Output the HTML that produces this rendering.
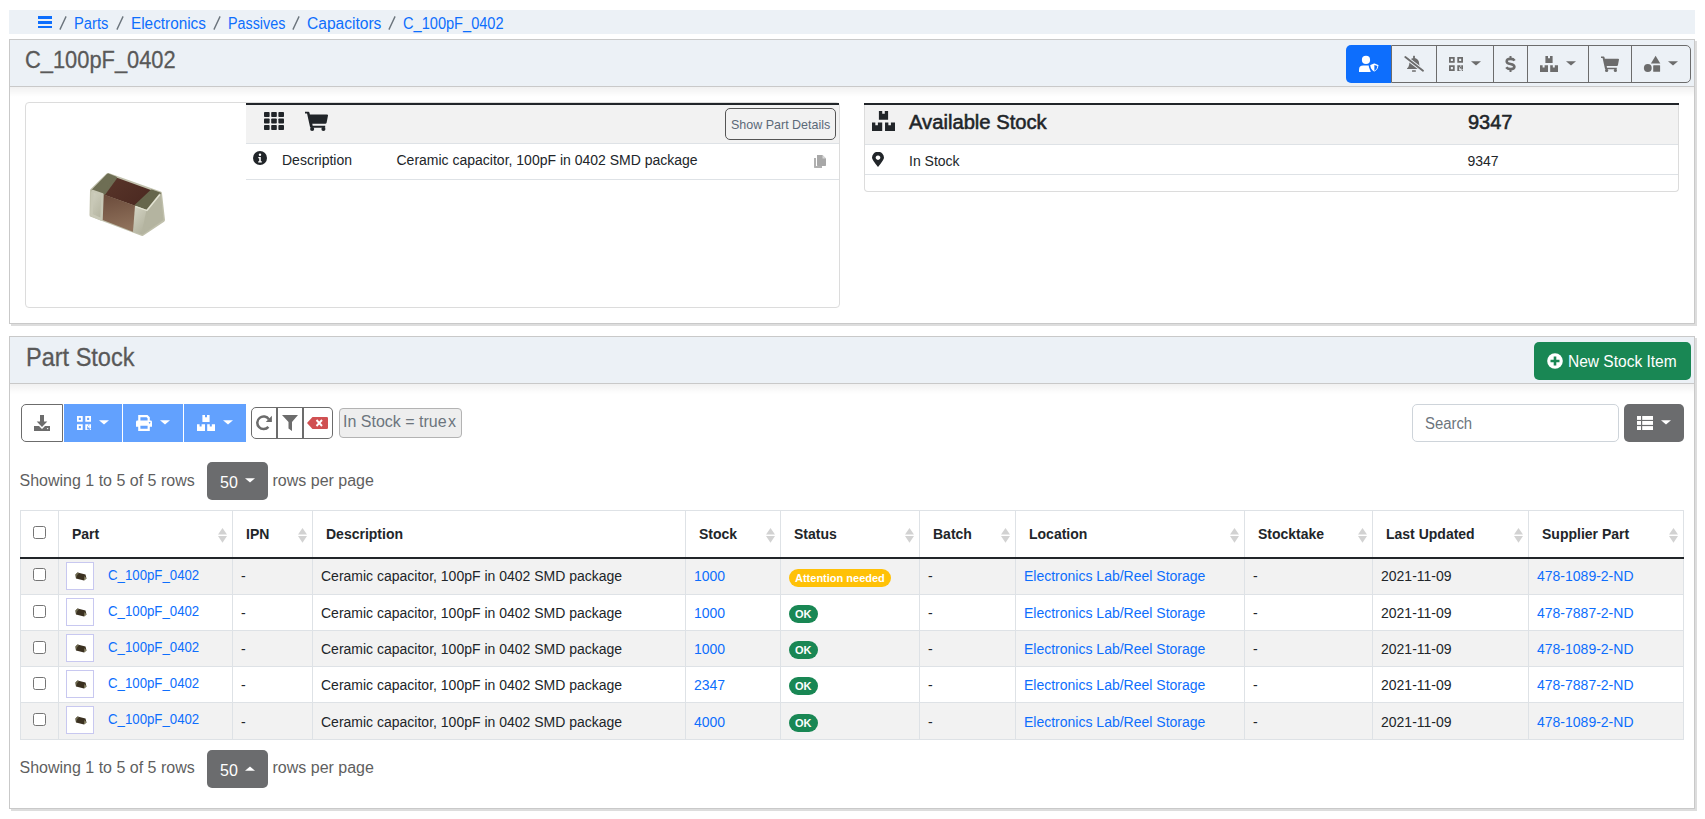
<!DOCTYPE html>
<html><head><meta charset="utf-8">
<style>
*{box-sizing:border-box;margin:0;padding:0}
html,body{width:1705px;height:819px;overflow:hidden;background:#fff}
body{font-family:"Liberation Sans",sans-serif;color:#212529;position:relative}
.abs{position:absolute}
.t{position:absolute;white-space:nowrap;line-height:1;transform-origin:0 0}
a{color:#0d6efd;text-decoration:none}
.sep{color:#6c757d}
.panel{position:absolute;left:9px;width:1686px;border:1px solid #c9c9c9;background:#fff;box-shadow:2px 2px #dddddd}
.ph{position:absolute;left:0;top:0;right:0;background:#ecf1f6;border-bottom:1px solid #c9c9c9}
.phs{position:absolute;left:0;right:0;height:10px;background:linear-gradient(rgba(0,0,0,.055),rgba(0,0,0,0))}
.ptitle{color:#595959}
.grp{position:absolute;border:1px solid #6c6c6c;background:#ecf1f6}
.vl{position:absolute;width:1px;background:#6c6c6c}
table.st{position:absolute;left:20px;top:510px;border-collapse:collapse;table-layout:fixed;width:1664px;font-size:14px}
table.st th,table.st td{border:1px solid #dee2e6;text-align:left;vertical-align:middle;white-space:nowrap;position:relative;overflow:hidden}
table.st th{height:47px;font-weight:bold;color:#212529;border-bottom:2px solid #212529;padding:0 0 0 13px}
table.st td{height:36px;padding:0 0 1px 8px}
table.st tbody tr:nth-child(odd) td{background:#f2f2f2}
table.st tbody tr:first-child td{height:37px}
table.st tbody tr:last-child td{height:37px}
table.st tbody tr+tr td{padding:1px 0 0 8px}
table.st tbody tr+tr .badge{top:1px}
table.st tbody tr+tr .cb{top:10px!important}
table.st tbody tr+tr .thumb{top:3px}
.sort{position:absolute;right:5px;top:16.5px}
.cb{position:absolute;left:12px;width:13px;height:13px;border:1px solid #757575;border-radius:2.5px;background:#fff}
.thumb{position:absolute;left:7px;top:3px;width:28px;height:28px;border:1px solid #c8c8f0;background:#fff}
.badge{display:inline-block;border-radius:9px;height:18px;line-height:18px;color:#fff;font-weight:bold;font-size:11px;padding:0 6px;vertical-align:middle;position:relative;top:2px}
</style></head><body>

<div class="abs" style="left:9px;top:10px;width:1686px;height:24px;background:#ecf1f6"></div>
<div class="abs" style="left:38px;top:16px;width:14px;height:2.6px;background:#0d6efd"></div>
<div class="abs" style="left:38px;top:21px;width:14px;height:2.6px;background:#0d6efd"></div>
<div class="abs" style="left:38px;top:25.8px;width:14px;height:2.6px;background:#0d6efd"></div>
<svg class="abs" style="left:58px;top:14px" width="10" height="18" viewBox="0 0 10 18"><path stroke="#6c757d" stroke-width="1.35" d="M1.9,15.6L8.1,2.4"/></svg>
<div class="t" style="left:74px;top:16px;font-size:16px;transform:scaleX(0.9202614379084967)"><a>Parts</a></div>
<svg class="abs" style="left:114.75px;top:14px" width="10" height="18" viewBox="0 0 10 18"><path stroke="#6c757d" stroke-width="1.35" d="M1.9,15.6L8.1,2.4"/></svg>
<div class="t" style="left:131px;top:16px;font-size:16px;transform:scaleX(0.9570701932858596)"><a>Electronics</a></div>
<svg class="abs" style="left:211.9px;top:14px" width="10" height="18" viewBox="0 0 10 18"><path stroke="#6c757d" stroke-width="1.35" d="M1.9,15.6L8.1,2.4"/></svg>
<div class="t" style="left:228px;top:16px;font-size:16px;transform:scaleX(0.8953285036222833)"><a>Passives</a></div>
<svg class="abs" style="left:290.75px;top:14px" width="10" height="18" viewBox="0 0 10 18"><path stroke="#6c757d" stroke-width="1.35" d="M1.9,15.6L8.1,2.4"/></svg>
<div class="t" style="left:307px;top:16px;font-size:16px;transform:scaleX(0.9729279466888796)"><a>Capacitors</a></div>
<svg class="abs" style="left:386.8px;top:14px" width="10" height="18" viewBox="0 0 10 18"><path stroke="#6c757d" stroke-width="1.35" d="M1.9,15.6L8.1,2.4"/></svg>
<div class="t" style="left:403px;top:16px;font-size:16px;transform:scaleX(0.911793400286944)"><a>C_100pF_0402</a></div>
<div class="panel" style="top:39px;height:285px"><div class="ph" style="height:47px"></div><div class="phs" style="top:47px"></div></div>
<div class="t ptitle" id="title" style="left:25px;top:49px;font-size:23.5px;transform:scaleX(0.93);-webkit-text-stroke:0.3px #595959">C_100pF_0402</div>
<div class="grp" style="left:1391px;top:45px;width:300px;height:38px;border-radius:0 5px 5px 0"></div>
<div class="abs" style="left:1346px;top:45px;width:45px;height:38px;border-radius:5px 0 0 5px;background:#0d6efd"></div>
<div class="vl" style="left:1436px;top:45px;height:38px"></div>
<div class="vl" style="left:1493px;top:45px;height:38px"></div>
<div class="vl" style="left:1527px;top:45px;height:38px"></div>
<div class="vl" style="left:1588px;top:45px;height:38px"></div>
<div class="vl" style="left:1631px;top:45px;height:38px"></div>
<svg class="abs" style="left:1358px;top:55px" width="22" height="18" viewBox="0 0 22 18">
<circle cx="8" cy="4.9" r="4.1" fill="#fff"/>
<path fill="#fff" d="M1,17.1v-2.4q0,-4.2 4.2,-4.2h5.6q1,0 1.8,0.4v6.2z"/>
<path fill="#fff" stroke="#0d6efd" stroke-width="1.6" d="M16.3,7.6L21.2,9.6Q21.4,15 16.3,17.6Q11.3,15 11.5,9.6Z"/>
<path fill="#0d6efd" d="M16.4,9.9L19.4,11.1Q19.3,14.4 16.4,15.9Z"/>
</svg>
<svg class="abs" style="left:1403px;top:55px" width="22" height="18" viewBox="0 0 22 18">
<rect fill="#6c6c6c" x="10.1" y="0.8" width="1.8" height="2.8"/>
<path fill="#6c6c6c" d="M7,4.8Q8.5,3 11,3Q14.5,3 15.8,6.5L16.4,10.3Q16.9,12.6 19.4,13.6V13.9H4V13.6Q5.8,12 6.2,9.5L6.5,7Q6.7,5.5 7,4.8Z"/>
<rect fill="#6c6c6c" x="9" y="15.2" width="3.9" height="1.6" rx="0.5"/>
<path stroke="#ecf1f6" stroke-width="3.8" d="M1.4,1.4L20.8,16.3"/>
<path stroke="#6c6c6c" stroke-width="1.9" stroke-linecap="round" d="M2.3,2.1L20,15.7"/>
</svg>
<svg class="abs" style="left:1449px;top:57px" width="14" height="14" viewBox="0 0 14 14">
<path fill="#6c6c6c" fill-rule="evenodd" d="M0,0h5.7v5.7h-5.7zM1.8,1.8v2.1h2.1v-2.1zM8.3,0h5.7v5.7h-5.7zM10.1,1.8v2.1h2.1v-2.1zM0,8.3h5.7v5.7h-5.7zM1.8,10.1v2.1h2.1v-2.1zM8.3,8.3h1.8v5.7h-1.8zM10.1,8.3h1.4v1.8h-1.4zM10.7,9.9h1.3v1.7h-1.3zM12.2,8.3h1.8v4.3h-1.8zM10.4,13h1v1h-1zM12.8,13h1.1v1h-1.1z"/></svg>
<svg class="abs" style="left:1471px;top:61px" width="10" height="5" viewBox="0 0 10 5"><path fill="#6c6c6c" d="M0,0.2L10,0.2L5,4.6Z"/></svg>
<svg class="abs" style="left:1505px;top:56px" width="11" height="16" viewBox="0 0 11 16"><path fill="none" stroke="#6c6c6c" stroke-width="2" d="M5.5,0V3M5.5,13V16"/><path fill="none" stroke="#6c6c6c" stroke-width="2.6" d="M9.6,4.6Q8.5,2.9 5.5,2.9Q1.7,2.9 1.7,5.5Q1.7,7.3 5.5,8Q9.4,8.7 9.4,10.8Q9.4,13.1 5.5,13.1Q2.5,13.1 1.3,11.3"/></svg>
<svg class="abs" style="left:1540px;top:56px" width="18" height="16" viewBox="0 0 18 16" preserveAspectRatio="none">
<path fill="#6c6c6c" d="M5.4,0h2.6v2.2h2v-2.2h2.6v6.9h-7.2zM0,9.2h2.6v2.2h2v-2.2h3.4v6.8h-8zM10.2,9.2h2.6v2.2h2v-2.2h3.2v6.8h-7.8z"/></svg>
<svg class="abs" style="left:1566px;top:61px" width="10" height="5" viewBox="0 0 10 5"><path fill="#6c6c6c" d="M0,0.2L10,0.2L5,4.6Z"/></svg>
<svg class="abs" style="left:1601px;top:56px" width="18" height="16" viewBox="0 0 18 16" preserveAspectRatio="none">
<path fill="#6c6c6c" d="M0,0.6h2.6q0.7,0 0.9,0.7l0.3,1.4h13.4q0.9,0 0.8,0.9l-1.1,5.7q-0.2,0.8 -1,0.8h-10.2l0.3,1.6h9.8v1.6h-11q-0.7,0 -0.9,-0.7l-2.3,-10.6h-1.6z"/>
<circle fill="#6c6c6c" cx="5.6" cy="14.4" r="1.6"/><circle fill="#6c6c6c" cx="14.4" cy="14.4" r="1.6"/></svg>
<svg class="abs" style="left:1643px;top:55px" width="18" height="17" viewBox="0 0 18 17">
<path fill="#6c6c6c" d="M12.6,0.8L17.3,8.5H7.9Z"/><circle fill="#6c6c6c" cx="4.8" cy="13" r="3.9"/><rect fill="#6c6c6c" x="10.2" y="10.2" width="6.9" height="6.6" rx="0.6"/></svg>
<svg class="abs" style="left:1668px;top:61px" width="10" height="5" viewBox="0 0 10 5"><path fill="#6c6c6c" d="M0,0.2L10,0.2L5,4.6Z"/></svg>
<div class="abs" style="left:25px;top:102px;width:815px;height:206px;border:1px solid #dcdcdc;border-radius:4px"></div>
<svg class="abs" style="left:80px;top:165px" width="95" height="80" viewBox="0 0 95 80">
<defs>
<linearGradient id="tf" x1="0" y1="0" x2="1" y2="0.6"><stop offset="0" stop-color="#5c382c"/><stop offset="1" stop-color="#4a2820"/></linearGradient>
<linearGradient id="ff" x1="0" y1="0" x2="0.2" y2="1"><stop offset="0" stop-color="#6a4a3a"/><stop offset="1" stop-color="#8e705a"/></linearGradient>
<linearGradient id="lt" x1="0" y1="0" x2="0.6" y2="1"><stop offset="0" stop-color="#d2d2c2"/><stop offset="1" stop-color="#b6b6a2"/></linearGradient>
<linearGradient id="rt" x1="0" y1="0" x2="0.6" y2="1"><stop offset="0" stop-color="#d6d6c6"/><stop offset="1" stop-color="#b2b29e"/></linearGradient>
</defs>
<path fill="#c0c0ac" stroke="#c0c0ac" stroke-width="4" stroke-linejoin="round" d="M28,10L80,28.5L83,55L62,69L11.5,50L12,25.5Z"/>
<path fill="url(#tf)" d="M28,9.5L80.5,28.5L67,45L12,25.5Z"/>
<path fill="#6e6e54" stroke="#6e6e54" stroke-width="3" stroke-linejoin="round" d="M28,10L35.5,12.8L23.5,29.3L13,25.5Z"/>
<path fill="#66664c" stroke="#66664c" stroke-width="2" stroke-linejoin="round" d="M71.5,25.5L80,28.5L67,44.5L55.5,40.6Z"/>
<path fill="url(#ff)" d="M22.5,29L56,41L53.5,67L21.5,54.5Z"/>
<path fill="url(#lt)" stroke="#c8c8b6" stroke-width="2.5" stroke-linejoin="round" d="M12.5,26L22.5,29.5L21.5,54.5L11.5,50Z"/>
<path fill="url(#rt)" d="M55,40.8L67,45L62,69.5L53,66.8Z"/>
<path fill="#b4b4a0" stroke="#b4b4a0" stroke-width="2" stroke-linejoin="round" d="M67.5,45L80,29.5L82.5,54.5L62.5,68.5Z"/>
<path fill="none" stroke="#e4e4d4" stroke-width="1.3" stroke-linecap="round" d="M56,41.6L67,45.5L79.5,30"/>
</svg>
<div class="abs" style="left:246px;top:103px;width:593px;height:2px;background:#212529"></div>
<div class="abs" style="left:246px;top:105px;width:593px;height:38px;background:#f2f2f2"></div>
<div class="abs" style="left:246px;top:143px;width:593px;height:1px;background:#dee2e6"></div>
<div class="abs" style="left:246px;top:179px;width:593px;height:1px;background:#dee2e6"></div>
<svg class="abs" style="left:264px;top:112px" width="20" height="18" viewBox="0 0 20 18"><g fill="#212529">
<rect x="0" y="0" width="5.6" height="5" rx="0.8"/><rect x="7.2" y="0" width="5.6" height="5" rx="0.8"/><rect x="14.4" y="0" width="5.6" height="5" rx="0.8"/>
<rect x="0" y="6.5" width="5.6" height="5" rx="0.8"/><rect x="7.2" y="6.5" width="5.6" height="5" rx="0.8"/><rect x="14.4" y="6.5" width="5.6" height="5" rx="0.8"/>
<rect x="0" y="13" width="5.6" height="5" rx="0.8"/><rect x="7.2" y="13" width="5.6" height="5" rx="0.8"/><rect x="14.4" y="13" width="5.6" height="5" rx="0.8"/></g></svg>
<svg class="abs" style="left:305px;top:111px" width="23" height="20" viewBox="0 0 18 16" preserveAspectRatio="none">
<path fill="#212529" d="M0,0.6h2.6q0.7,0 0.9,0.7l0.3,1.4h13.4q0.9,0 0.8,0.9l-1.1,5.7q-0.2,0.8 -1,0.8h-10.2l0.3,1.6h9.8v1.6h-11q-0.7,0 -0.9,-0.7l-2.3,-10.6h-1.6z"/>
<circle fill="#212529" cx="5.6" cy="14.4" r="1.6"/><circle fill="#212529" cx="14.4" cy="14.4" r="1.6"/></svg>
<div class="abs" style="left:725px;top:108px;width:111px;height:32px;border:1px solid #555;border-radius:5px"></div>
<div class="t" style="left:730.5px;top:117.5px;font-size:13.5px;color:#5b6978;transform:scaleX(0.925)">Show Part Details</div>
<svg class="abs" style="left:253px;top:151px" width="14" height="14" viewBox="0 0 14 14"><circle cx="7" cy="7" r="7" fill="#212529"/>
<circle cx="7" cy="3.8" r="1.2" fill="#fff"/><path fill="#fff" d="M5.3,5.9h2.5v4.3h1v1.3h-3.6v-1.3h1v-3h-0.9z"/></svg>
<div class="t" style="left:282px;top:153px;font-size:14px">Description</div>
<div class="t" style="left:396.5px;top:153px;font-size:14px">Ceramic capacitor, 100pF in 0402 SMD package</div>
<svg class="abs" style="left:814px;top:155px" width="12" height="13" viewBox="0 0 12 13"><path fill="#b0b0b0" d="M0,3h2v8h6v2h-7.3q-0.7,0 -0.7,-0.7z"/><path fill="#a8a8a8" d="M3,0h5.5l3.5,3.5v6.8q0,0.7 -0.7,0.7h-7.6q-0.7,0 -0.7,-0.7z"/><path fill="#d8d8d8" d="M8.5,0v3.5h3.5z"/></svg>
<div class="abs" style="left:864px;top:103px;width:815px;height:89px;border:1px solid #dcdcdc;border-top:none;border-radius:0 0 4px 4px"></div>
<div class="abs" style="left:864px;top:103px;width:815px;height:2px;background:#212529"></div>
<div class="abs" style="left:865px;top:105px;width:813px;height:39px;background:#f2f2f2"></div>
<div class="abs" style="left:865px;top:144px;width:813px;height:1px;background:#dee2e6"></div>
<div class="abs" style="left:865px;top:174px;width:813px;height:1px;background:#dee2e6"></div>
<svg class="abs" style="left:872px;top:111px" width="23" height="20" viewBox="0 0 18 16" preserveAspectRatio="none">
<path fill="#212529" d="M5.4,0h2.6v2.2h2v-2.2h2.6v6.9h-7.2zM0,9.2h2.6v2.2h2v-2.2h3.4v6.8h-8zM10.2,9.2h2.6v2.2h2v-2.2h3.2v6.8h-7.8z"/></svg>
<div class="t" style="left:909px;top:112px;font-size:20.5px;-webkit-text-stroke:0.55px #212529;transform:scaleX(0.985)">Available Stock</div>
<div class="t" style="left:1468px;top:112px;font-size:20px;-webkit-text-stroke:0.55px #212529">9347</div>
<svg class="abs" style="left:872px;top:152px" width="12" height="15" viewBox="0 0 12 15"><path fill="#212529" fill-rule="evenodd" d="M6,15Q0,7.5 0,5.7A5.8,5.8 0 0 1 12,5.7Q12,7.5 6,15ZM6,3.4A2.3,2.3 0 1 0 6.01,3.4Z"/></svg>
<div class="t" style="left:909px;top:154px;font-size:14px">In Stock</div>
<div class="t" style="left:1467.5px;top:154px;font-size:14px">9347</div>
<div class="panel" style="top:336px;height:473px"><div class="ph" style="height:47px"></div><div class="phs" style="top:47px"></div></div>
<div class="t ptitle" style="left:25.5px;top:345px;font-size:25px;transform:scaleX(0.94);-webkit-text-stroke:0.3px #595959">Part Stock</div>
<div class="abs" style="left:1534px;top:342px;width:157px;height:38px;background:#198754;border-radius:5px"></div>
<svg class="abs" style="left:1547px;top:353px" width="16" height="16" viewBox="0 0 16 16"><circle cx="8" cy="8" r="7.8" fill="#fff"/><path fill="#198754" d="M6.7,3.5h2.6v3.2h3.2v2.6h-3.2v3.2h-2.6v-3.2h-3.2v-2.6h3.2z"/></svg>
<div class="t" style="left:1568px;top:353.5px;font-size:16px;color:#fff;transform:scaleX(0.97)">New Stock Item</div>
<div class="abs" style="left:21px;top:404px;width:42px;height:38px;border:1px solid #6c6c6c;border-radius:5px 0 0 5px"></div>
<svg class="abs" style="left:34px;top:415px" width="16" height="16" viewBox="0 0 16 16"><path fill="#6c6c6c" d="M6,0h4v6.6h3.3L8,12L2.7,6.6H6z"/><path fill="#6c6c6c" d="M0,11h5l3,3l3,-3h5v5h-16z"/><circle cx="13.6" cy="13.6" r="0.7" fill="#fff"/></svg>
<div class="abs" style="left:64px;top:404px;width:58px;height:38px;background:#62a1fe"></div>
<div class="abs" style="left:123px;top:404px;width:60px;height:38px;background:#62a1fe"></div>
<div class="abs" style="left:184px;top:404px;width:62px;height:38px;background:#62a1fe"></div>
<svg class="abs" style="left:77px;top:416px" width="14" height="14" viewBox="0 0 14 14">
<path fill="#fff" fill-rule="evenodd" d="M0,0h5.7v5.7h-5.7zM1.8,1.8v2.1h2.1v-2.1zM8.3,0h5.7v5.7h-5.7zM10.1,1.8v2.1h2.1v-2.1zM0,8.3h5.7v5.7h-5.7zM1.8,10.1v2.1h2.1v-2.1zM8.3,8.3h1.8v5.7h-1.8zM10.1,8.3h1.4v1.8h-1.4zM10.7,9.9h1.3v1.7h-1.3zM12.2,8.3h1.8v4.3h-1.8zM10.4,13h1v1h-1zM12.8,13h1.1v1h-1.1z"/></svg>
<svg class="abs" style="left:99px;top:420px" width="10" height="5" viewBox="0 0 10 5"><path fill="#fff" d="M0,0.2L10,0.2L5,4.6Z"/></svg>
<svg class="abs" style="left:136px;top:415px" width="16" height="16" viewBox="0 0 16 16"><path fill="#fff" fill-rule="evenodd" d="M2.2,0h9.3l2.3,2.3v3.3h0.8q1.4,0 1.4,1.4v4.8h-2.2v4.2h-11.6v-4.2h-2.2v-4.8q0,-1.4 1.4,-1.4h0.8zM4.4,2.2v3.4h7.2v-2.4l-1,-1zM4.4,10.8v3h7.2v-3zM13.6,6.9a0.8,0.8 0 1 0 0.01,0z"/></svg>
<svg class="abs" style="left:160px;top:420px" width="10" height="5" viewBox="0 0 10 5"><path fill="#fff" d="M0,0.2L10,0.2L5,4.6Z"/></svg>
<svg class="abs" style="left:197px;top:415px" width="18" height="16" viewBox="0 0 18 16" preserveAspectRatio="none">
<path fill="#fff" d="M5.4,0h2.6v2.2h2v-2.2h2.6v6.9h-7.2zM0,9.2h2.6v2.2h2v-2.2h3.4v6.8h-8zM10.2,9.2h2.6v2.2h2v-2.2h3.2v6.8h-7.8z"/></svg>
<svg class="abs" style="left:223px;top:420px" width="10" height="5" viewBox="0 0 10 5"><path fill="#fff" d="M0,0.2L10,0.2L5,4.6Z"/></svg>
<div class="abs" style="left:251px;top:407px;width:26px;height:32px;border:1px solid #6c6c6c;border-radius:5px 0 0 5px"></div>
<div class="abs" style="left:276px;top:407px;width:28px;height:32px;border:1px solid #6c6c6c;border-left-width:2px"></div>
<div class="abs" style="left:302px;top:407px;width:31px;height:32px;border:1px solid #6c6c6c;border-left-width:2px;border-radius:0 5px 5px 0"></div>
<svg class="abs" style="left:256px;top:415px" width="16" height="16" viewBox="0 0 16 16"><path fill="none" stroke="#6c6c6c" stroke-width="2.5" d="M12.4,11.9A6.3,6.3 0 1 1 12.9,4.4"/><path fill="#6c6c6c" d="M15.9,0.8v6.1h-6.1z"/></svg>
<svg class="abs" style="left:282px;top:415px" width="16" height="16" viewBox="0 0 16 16"><path fill="#6c6c6c" d="M0,0h16l-6,7v9l-3.5,-2.5v-6.5z"/></svg>
<svg class="abs" style="left:307px;top:417px" width="21" height="12" viewBox="0 0 21 12"><path fill="#d05052" d="M0,6L5.5,0h14.2q1.3,0 1.3,1.3v9.4q0,1.3 -1.3,1.3h-14.2z"/><path stroke="#fff" stroke-width="1.9" d="M9.5,3L15,9M15,3L9.5,9"/></svg>
<div class="abs" style="left:339px;top:408px;width:123px;height:30px;background:#eee;border:1px solid #b3b3b3;border-radius:4px"></div>
<div class="t" style="left:343px;top:414px;font-size:16px;color:#6c757d">In Stock = true<span style="letter-spacing:-3px"> </span>x</div>
<div class="abs" style="left:1412px;top:404px;width:207px;height:38px;border:1px solid #ced4da;border-radius:5px"></div>
<div class="t" style="left:1424.5px;top:416px;font-size:16px;color:#6c757d;transform:scaleX(0.93)">Search</div>
<div class="abs" style="left:1624px;top:404px;width:60px;height:38px;background:#6b6c6e;border-radius:5px"></div>
<svg class="abs" style="left:1637px;top:416px" width="16" height="14" viewBox="0 0 16 14"><g fill="#fff"><rect x="0" y="0" width="4" height="3.9"/><rect x="5.2" y="0" width="10.8" height="3.9"/><rect x="0" y="5" width="4" height="3.9"/><rect x="5.2" y="5" width="10.8" height="3.9"/><rect x="0" y="10.1" width="4" height="3.9"/><rect x="5.2" y="10.1" width="10.8" height="3.9"/></g></svg>
<svg class="abs" style="left:1661px;top:419.5px" width="10" height="5" viewBox="0 0 10 5"><path fill="#fff" d="M0,0.2L10,0.2L5,4.6Z"/></svg>
<div class="t" style="left:19.5px;top:472.5px;font-size:16px;color:#5f5f5f">Showing 1 to 5 of 5 rows</div>
<div class="abs" style="left:207px;top:462px;width:61px;height:38px;background:#6b6c6e;border-radius:5px"></div>
<div class="t" style="left:220px;top:475px;font-size:16px;color:#fff">50</div>
<svg class="abs" style="left:245px;top:478px" width="10" height="5" viewBox="0 0 10 5"><path fill="#fff" d="M0,0.2L10,0.2L5,4.6Z"/></svg>
<div class="t" style="left:272.5px;top:472.5px;font-size:16px;color:#5f5f5f">rows per page</div>
<div class="t" style="left:19.5px;top:759.5px;font-size:16px;color:#5f5f5f">Showing 1 to 5 of 5 rows</div>
<div class="abs" style="left:207px;top:750px;width:61px;height:38px;background:#6b6c6e;border-radius:5px"></div>
<div class="t" style="left:220px;top:763px;font-size:16px;color:#fff">50</div>
<svg class="abs" style="left:245px;top:766px" width="10" height="5" viewBox="0 0 10 5"><path fill="#fff" d="M0,4.8L5,0.4L10,4.8Z"/></svg>
<div class="t" style="left:272.5px;top:759.5px;font-size:16px;color:#5f5f5f">rows per page</div>
<table class="st"><colgroup><col style="width:38px"><col style="width:174px"><col style="width:80px"><col style="width:373px"><col style="width:95px"><col style="width:139px"><col style="width:96px"><col style="width:229px"><col style="width:128px"><col style="width:156px"><col style="width:155px"></colgroup><thead><tr>
<th><span class="cb" style="top:15px"></span></th>
<th>Part<svg class="sort" width="9" height="15" viewBox="0 0 9 15"><path fill="#d2d2d2" d="M4.5,0L9,6.6H0ZM0,8.1H9L4.5,14.7Z"/></svg></th>
<th>IPN<svg class="sort" width="9" height="15" viewBox="0 0 9 15"><path fill="#d2d2d2" d="M4.5,0L9,6.6H0ZM0,8.1H9L4.5,14.7Z"/></svg></th>
<th>Description</th>
<th>Stock<svg class="sort" width="9" height="15" viewBox="0 0 9 15"><path fill="#d2d2d2" d="M4.5,0L9,6.6H0ZM0,8.1H9L4.5,14.7Z"/></svg></th>
<th>Status<svg class="sort" width="9" height="15" viewBox="0 0 9 15"><path fill="#d2d2d2" d="M4.5,0L9,6.6H0ZM0,8.1H9L4.5,14.7Z"/></svg></th>
<th>Batch<svg class="sort" width="9" height="15" viewBox="0 0 9 15"><path fill="#d2d2d2" d="M4.5,0L9,6.6H0ZM0,8.1H9L4.5,14.7Z"/></svg></th>
<th>Location<svg class="sort" width="9" height="15" viewBox="0 0 9 15"><path fill="#d2d2d2" d="M4.5,0L9,6.6H0ZM0,8.1H9L4.5,14.7Z"/></svg></th>
<th>Stocktake<svg class="sort" width="9" height="15" viewBox="0 0 9 15"><path fill="#d2d2d2" d="M4.5,0L9,6.6H0ZM0,8.1H9L4.5,14.7Z"/></svg></th>
<th>Last Updated<svg class="sort" width="9" height="15" viewBox="0 0 9 15"><path fill="#d2d2d2" d="M4.5,0L9,6.6H0ZM0,8.1H9L4.5,14.7Z"/></svg></th>
<th>Supplier Part<svg class="sort" width="9" height="15" viewBox="0 0 9 15"><path fill="#d2d2d2" d="M4.5,0L9,6.6H0ZM0,8.1H9L4.5,14.7Z"/></svg></th>
</tr></thead><tbody>
<tr>
<td><span class="cb" style="top:9px"></span></td>
<td><span class="thumb"><svg style="position:absolute;left:8px;top:9px" width="12" height="9" viewBox="0 0 12 9"><path fill="#3a3020" d="M2.5,0.5L10.5,2.5L11.5,6.5L9,8.5L1,6.5L0.5,2.5Z"/><path fill="#6e6a50" d="M0.5,2.5L2.5,0.5L4,1L2,3.5L1,6.5Z"/><path fill="#8a8668" d="M9,8.5L9.5,4L11.5,6.5Z"/></svg></span><a style="position:absolute;left:49px;top:8px;transform:scaleX(0.945);transform-origin:0 0">C_100pF_0402</a></td>
<td>-</td><td>Ceramic capacitor, 100pF in 0402 SMD package</td>
<td><a>1000</a></td><td><span class="badge" style="background:#ffc107">Attention needed</span></td><td>-</td><td><a>Electronics Lab/Reel Storage</a></td><td>-</td><td>2021-11-09</td><td><a>478-1089-2-ND</a></td>
</tr>
<tr>
<td><span class="cb" style="top:9px"></span></td>
<td><span class="thumb"><svg style="position:absolute;left:8px;top:9px" width="12" height="9" viewBox="0 0 12 9"><path fill="#3a3020" d="M2.5,0.5L10.5,2.5L11.5,6.5L9,8.5L1,6.5L0.5,2.5Z"/><path fill="#6e6a50" d="M0.5,2.5L2.5,0.5L4,1L2,3.5L1,6.5Z"/><path fill="#8a8668" d="M9,8.5L9.5,4L11.5,6.5Z"/></svg></span><a style="position:absolute;left:49px;top:8px;transform:scaleX(0.945);transform-origin:0 0">C_100pF_0402</a></td>
<td>-</td><td>Ceramic capacitor, 100pF in 0402 SMD package</td>
<td><a>1000</a></td><td><span class="badge" style="background:#198754">OK</span></td><td>-</td><td><a>Electronics Lab/Reel Storage</a></td><td>-</td><td>2021-11-09</td><td><a>478-7887-2-ND</a></td>
</tr>
<tr>
<td><span class="cb" style="top:9px"></span></td>
<td><span class="thumb"><svg style="position:absolute;left:8px;top:9px" width="12" height="9" viewBox="0 0 12 9"><path fill="#3a3020" d="M2.5,0.5L10.5,2.5L11.5,6.5L9,8.5L1,6.5L0.5,2.5Z"/><path fill="#6e6a50" d="M0.5,2.5L2.5,0.5L4,1L2,3.5L1,6.5Z"/><path fill="#8a8668" d="M9,8.5L9.5,4L11.5,6.5Z"/></svg></span><a style="position:absolute;left:49px;top:8px;transform:scaleX(0.945);transform-origin:0 0">C_100pF_0402</a></td>
<td>-</td><td>Ceramic capacitor, 100pF in 0402 SMD package</td>
<td><a>1000</a></td><td><span class="badge" style="background:#198754">OK</span></td><td>-</td><td><a>Electronics Lab/Reel Storage</a></td><td>-</td><td>2021-11-09</td><td><a>478-1089-2-ND</a></td>
</tr>
<tr>
<td><span class="cb" style="top:9px"></span></td>
<td><span class="thumb"><svg style="position:absolute;left:8px;top:9px" width="12" height="9" viewBox="0 0 12 9"><path fill="#3a3020" d="M2.5,0.5L10.5,2.5L11.5,6.5L9,8.5L1,6.5L0.5,2.5Z"/><path fill="#6e6a50" d="M0.5,2.5L2.5,0.5L4,1L2,3.5L1,6.5Z"/><path fill="#8a8668" d="M9,8.5L9.5,4L11.5,6.5Z"/></svg></span><a style="position:absolute;left:49px;top:8px;transform:scaleX(0.945);transform-origin:0 0">C_100pF_0402</a></td>
<td>-</td><td>Ceramic capacitor, 100pF in 0402 SMD package</td>
<td><a>2347</a></td><td><span class="badge" style="background:#198754">OK</span></td><td>-</td><td><a>Electronics Lab/Reel Storage</a></td><td>-</td><td>2021-11-09</td><td><a>478-7887-2-ND</a></td>
</tr>
<tr>
<td><span class="cb" style="top:9px"></span></td>
<td><span class="thumb"><svg style="position:absolute;left:8px;top:9px" width="12" height="9" viewBox="0 0 12 9"><path fill="#3a3020" d="M2.5,0.5L10.5,2.5L11.5,6.5L9,8.5L1,6.5L0.5,2.5Z"/><path fill="#6e6a50" d="M0.5,2.5L2.5,0.5L4,1L2,3.5L1,6.5Z"/><path fill="#8a8668" d="M9,8.5L9.5,4L11.5,6.5Z"/></svg></span><a style="position:absolute;left:49px;top:8px;transform:scaleX(0.945);transform-origin:0 0">C_100pF_0402</a></td>
<td>-</td><td>Ceramic capacitor, 100pF in 0402 SMD package</td>
<td><a>4000</a></td><td><span class="badge" style="background:#198754">OK</span></td><td>-</td><td><a>Electronics Lab/Reel Storage</a></td><td>-</td><td>2021-11-09</td><td><a>478-1089-2-ND</a></td>
</tr>
</tbody></table>
</body></html>
